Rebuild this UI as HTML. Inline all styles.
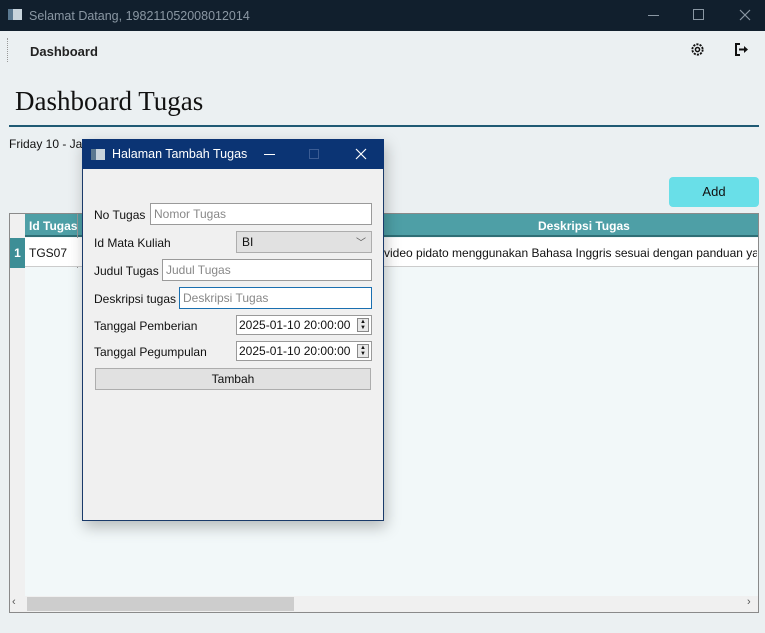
<!DOCTYPE html>
<html><head><style>
*{margin:0;padding:0;box-sizing:border-box}
body{width:765px;height:633px;background:#ebf0f2;font-family:"Liberation Sans",sans-serif;font-size:12px;color:#111;position:relative;overflow:hidden}
.a{position:absolute}
.tb{left:0;top:0;width:765px;height:31px;background:#111f2d;color:#8a97a3;font-size:12.5px}
.inp{position:absolute;background:#fff;border:1px solid #9a9a9a;color:#888;font-size:12px;padding:2px 3px;height:22px;line-height:16px}
.lbl{position:absolute;font-size:12px;color:#111}
.dt{position:absolute;background:#fff;border:1px solid #9a9a9a;left:236px;width:136px;height:20px;font-size:12px;padding:2px 2px;line-height:15px}
.sp{position:absolute;right:2px;top:2px;width:12px;height:14px;border:1px solid #888;background:#e8e8e8;font-size:6px;line-height:6px;text-align:center}
</style></head><body>
<div class="a tb">
 <div class="a" style="left:8px;top:9px;width:14px;height:11px;background:#c8d4dc;border-left:5px solid #5a7890"></div>
 <div class="a" style="left:29px;top:9px">Selamat Datang, 198211052008012014</div>
 <div class="a" style="left:648px;top:15px;width:11px;height:1px;background:#8a97a3"></div>
 <div class="a" style="left:693px;top:9px;width:11px;height:11px;border:1px solid #8a97a3"></div>
 <svg class="a" style="left:739px;top:9px" width="12" height="12"><path d="M1 1L11 11M11 1L1 11" stroke="#8a97a3" stroke-width="1.2"/></svg>
</div>
<div class="a" style="left:7px;top:38px;height:24px;border-left:1px dotted #999"></div>
<div class="a" style="left:30px;top:44px;font-weight:bold;font-size:13px;color:#222">Dashboard</div>
<svg class="a" style="left:690px;top:42px" width="15" height="15" viewBox="0 0 16 16"><circle cx="8" cy="8" r="5.5" fill="none" stroke="#111" stroke-width="2" stroke-dasharray="2.3 1.2"/><circle cx="8" cy="8" r="2.2" fill="none" stroke="#111" stroke-width="1.6"/></svg>
<svg class="a" style="left:734px;top:43px" width="15" height="13" viewBox="0 0 15 13"><path d="M6 1H2v11h4" fill="none" stroke="#111" stroke-width="2"/><path d="M5 6.5h6" stroke="#111" stroke-width="2"/><path d="M10 3l4 3.5-4 3.5z" fill="#111"/></svg>
<div class="a" style="left:15px;top:86px;font-family:'Liberation Serif',serif;font-size:27px;color:#111">Dashboard Tugas</div>
<div class="a" style="left:9px;top:125px;width:750px;height:2px;background:#1f5a74"></div>
<div class="a" style="left:9px;top:137px;font-size:12px">Friday 10 - Jan</div>
<div class="a" style="left:669px;top:177px;width:90px;height:30px;background:#69dfe8;border-radius:4px;text-align:center;line-height:30px;font-size:13px">Add</div>
<div class="a" style="left:9px;top:213px;width:750px;height:400px;border:1px solid #8a8a8a;background:#f2f8f9"></div>
<div class="a" style="left:10px;top:214px;width:15px;height:382px;background:#f0f0f0"></div>
<div class="a" style="left:25px;top:214px;width:733px;height:23px;background:#4e9fa6;border-bottom:2px solid #2f6f76"></div>
<div class="a" style="left:29px;top:219px;color:#fff;font-weight:bold;font-size:12px">Id Tugas</div>
<div class="a" style="left:77px;top:214px;width:1px;height:54px;background:#999"></div>
<div class="a" style="left:538px;top:219px;color:#fff;font-weight:bold;font-size:12px">Deskripsi Tugas</div>
<div class="a" style="left:25px;top:238px;width:733px;height:29px;background:#fff;border-bottom:1px solid #ccc"></div>
<div class="a" style="left:10px;top:238px;width:15px;height:30px;background:#3d8e96;color:#fff;font-weight:bold;text-align:center;line-height:30px">1</div>
<div class="a" style="left:29px;top:246px">TGS07</div>
<div class="a" style="left:384px;top:246px;width:373px;overflow:hidden;white-space:nowrap">video pidato menggunakan Bahasa Inggris sesuai dengan panduan yang</div>
<div class="a" style="left:10px;top:596px;width:748px;height:16px;background:#f0f0f0"></div>
<div class="a" style="left:27px;top:597px;width:267px;height:14px;background:#cdcdcd"></div>
<div class="a" style="left:12px;top:596px;font-size:11px;color:#555">‹</div>
<div class="a" style="left:747px;top:596px;font-size:11px;color:#555">›</div>
<div class="a" style="left:82px;top:139px;width:302px;height:382px;background:#f0f0f0;border:1px solid #1a3a6a;box-shadow:2px 6px 14px rgba(0,0,0,.25)"></div>
<div class="a" style="left:82px;top:139px;width:302px;height:30px;background:#0b3474;color:#fff;font-size:12.5px">
 <div class="a" style="left:9px;top:10px;width:14px;height:11px;background:#c8d4dc;border-left:5px solid #5a7890"></div>
 <div class="a" style="left:30px;top:8px">Halaman Tambah Tugas</div>
 <div class="a" style="left:182px;top:15px;width:11px;height:1px;background:#fff"></div>
 <div class="a" style="left:227px;top:10px;width:10px;height:10px;border:1px solid #3b5c94"></div>
 <svg class="a" style="left:273px;top:9px" width="12" height="12"><path d="M1 1L11 11M11 1L1 11" stroke="#fff" stroke-width="1.2"/></svg>
</div>
<div class="lbl" style="left:94px;top:208px">No Tugas</div>
<div class="inp" style="left:150px;top:203px;width:222px">Nomor Tugas</div>
<div class="lbl" style="left:94px;top:236px">Id Mata Kuliah</div>
<div class="a" style="left:236px;top:231px;width:136px;height:22px;background:#e1e1e1;border:1px solid #adadad;padding:3px 5px;font-size:12px">BI<span style="position:absolute;right:5px;top:2px;color:#555;font-size:10px">﹀</span></div>
<div class="lbl" style="left:94px;top:264px">Judul Tugas</div>
<div class="inp" style="left:162px;top:259px;width:210px">Judul Tugas</div>
<div class="lbl" style="left:94px;top:292px">Deskripsi tugas</div>
<div class="inp" style="left:179px;top:287px;width:193px;border-color:#1a6fb0">Deskripsi Tugas</div>
<div class="lbl" style="left:94px;top:319px">Tanggal Pemberian</div>
<div class="dt" style="top:315px">2025-01-10 20:00:00<div class="sp">▲<br>▼</div></div>
<div class="lbl" style="left:94px;top:345px">Tanggal Pegumpulan</div>
<div class="dt" style="top:341px">2025-01-10 20:00:00<div class="sp">▲<br>▼</div></div>
<div class="a" style="left:95px;top:368px;width:276px;height:22px;background:#e1e1e1;border:1px solid #adadad;text-align:center;line-height:20px">Tambah</div>
</body></html>
